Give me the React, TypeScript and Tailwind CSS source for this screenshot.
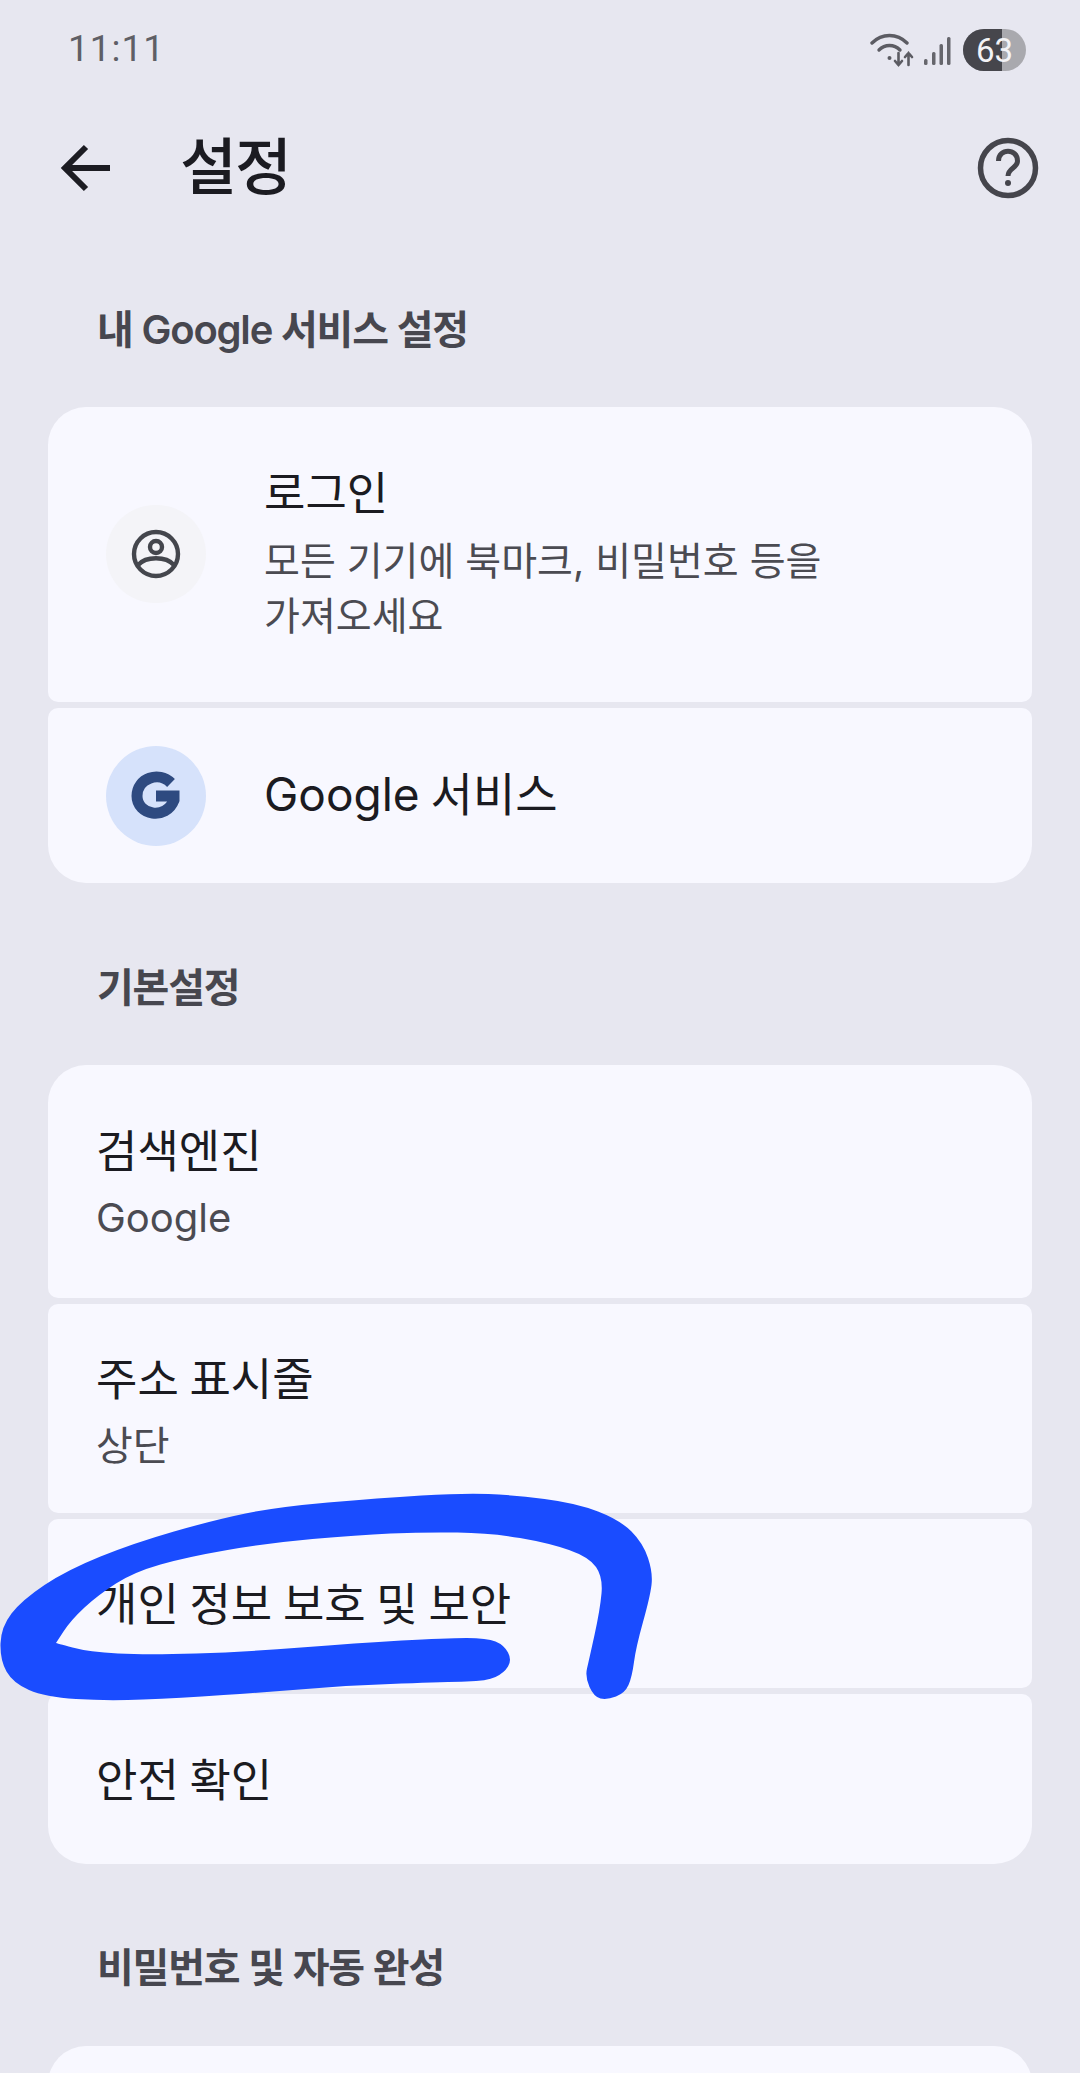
const fontStack = { fontFamily: 'Inter, "Noto Sans CJK KR", "Noto Sans", sans-serif' };

// outline of the hand-drawn pen mark, traced clockwise from the end of the lower stroke
const scribble: [number, number][] = [
  [487, 1638], [446, 1638], [357, 1643], [245, 1652], [147, 1655], [89, 1652], [56, 1643],
  [56, 1643], [71, 1620], [98, 1595], [134, 1572], [187, 1557], [268, 1543], [357, 1535],
  [424, 1532], [491, 1533], [549, 1543], [589, 1557], [603, 1577], [600, 1610], [589, 1660],
  [585, 1677], [594, 1697], [607, 1700], [625, 1693], [632, 1677], [636, 1647], [650, 1597],
  [653, 1573], [643, 1543], [620, 1520], [576, 1503], [513, 1495], [464, 1493], [379, 1498],
  [277, 1507], [214, 1520], [134, 1543], [67, 1570], [22, 1600], [1, 1627], [0, 1660],
  [13, 1683], [45, 1697], [107, 1701], [179, 1698], [268, 1692], [357, 1685], [446, 1682],
  [487, 1681], [504, 1673], [512, 1660], [504, 1645],
];

function smoothPath(points: [number, number][]) {
  const mid = (a: [number, number], b: [number, number]) => [(a[0] + b[0]) / 2, (a[1] + b[1]) / 2];
  const start = mid(points[points.length - 1], points[0]);
  let d = `M${start[0]} ${start[1]}`;
  points.forEach((p, i) => {
    const m = mid(p, points[(i + 1) % points.length]);
    d += ` Q${p[0]} ${p[1]} ${m[0]} ${m[1]}`;
  });
  return d + " Z";
}

function WifiIcon() {
  return (
    <svg width="44" height="34" viewBox="0 0 44 34" fill="none" stroke="#5c5c63" strokeLinecap="round">
      <path d="M2 10 C12 0 27 0 37 10" strokeWidth="3.4" />
      <path d="M9 17 C15 11 24 11 30 17" strokeWidth="3.4" />
      <circle cx="19.5" cy="25" r="2" fill="#5c5c63" stroke="none" />
      <path d="M28.5 20 V32 M25 28 L28.5 32 L32 28" strokeWidth="2.6" />
      <path d="M38.5 32 V20 M35 24 L38.5 20 L42 24" strokeWidth="2.6" />
    </svg>
  );
}

function SignalIcon() {
  return (
    <svg width="28" height="30" viewBox="0 0 28 30" fill="#66666c">
      <rect x="1" y="22" width="3.5" height="6" rx="1.5" />
      <rect x="9" y="15" width="3.5" height="13" rx="1.5" />
      <rect x="16.5" y="7" width="3.5" height="21" rx="1.5" />
      <rect x="24" y="0" width="3.5" height="28" rx="1.5" />
    </svg>
  );
}

function Battery() {
  return (
    <div className="relative flex h-[42px] w-[63px] items-center justify-center overflow-hidden rounded-[21px] bg-[#a9a9ae]">
      <div className="absolute inset-y-0 left-0 w-[39px] bg-[#46464c]" />
      <span className="relative text-[33px] leading-none text-[#f3f3f6]" style={{ fontFamily: "Roboto, sans-serif" }}>
        63
      </span>
    </div>
  );
}

function BackArrow() {
  return (
    <svg width="50" height="48" viewBox="0 0 50 48" fill="none" stroke="#1c1c22" strokeWidth="6">
      <path d="M50 24 H5" />
      <path d="M26 3 L5 24 L26 45" />
    </svg>
  );
}

function HelpIcon() {
  return (
    <svg width="62" height="62" viewBox="0 0 62 62" fill="none" stroke="#45454c" strokeWidth="5.5">
      <circle cx="31" cy="31" r="27.5" />
      <path d="M21.5 24 C21.5 11 40.5 11 40.5 24 C40.5 31 31 31 31 39" strokeWidth="5" />
      <circle cx="31" cy="46" r="3" fill="#45454c" stroke="none" />
    </svg>
  );
}

function PersonIcon() {
  return (
    <svg width="50" height="50" viewBox="0 0 50 50" fill="none" stroke="#44464d" strokeWidth="4.4">
      <circle cx="25" cy="25" r="22" />
      <circle cx="25" cy="18" r="6" />
      <path d="M7 36 C15 27 35 27 43 36" />
    </svg>
  );
}

function GoogleG() {
  return (
    <svg width="50" height="50" viewBox="0 0 50 50" fill="none" stroke="#2e4a80" strokeWidth="11">
      <path d="M40 12 C28 0 6 7 6 25 C6 44 35 50 43 29 L43 25 H25" />
    </svg>
  );
}

function SectionTitle({ children, className }: { children: string; className: string }) {
  return <h2 className={`pl-[97px] text-[40px] leading-[50px] font-semibold tracking-[-1.2px] text-[#47474f] ${className}`}>{children}</h2>;
}

function Row({
  title,
  sub,
  className,
}: {
  title: string;
  sub?: string;
  className: string;
}) {
  return (
    <div className={`bg-[#f8f8ff] pl-[48px] ${className}`}>
      <div className="text-[45px] leading-[60px] [word-spacing:-2px] text-[#1b1b21]">{title}</div>
      {sub && <div className="mt-[8px] text-[40px] leading-[55px] text-[#4b4b52]">{sub}</div>}
    </div>
  );
}

export default function App() {
  return (
    <div className="relative h-[2073px] w-[1080px] overflow-hidden bg-[#e7e7f0]" style={fontStack}>
      <div className="flex h-[100px] items-start justify-between pr-[54px] pl-[68px]">
        <span className="pt-[24px] text-[37px] leading-[50px] tracking-[1px] text-[#5f5f66]" style={{ fontFamily: "Roboto, sans-serif" }}>
          11:11
        </span>
        <div className="flex items-start pt-[29px]">
          <div className="pt-[4px]">
            <WifiIcon />
          </div>
          <div className="mr-[12px] ml-[9px] pt-[8px]">
            <SignalIcon />
          </div>
          <Battery />
        </div>
      </div>

      <header className="flex h-[136px] items-center pr-[41px] pl-[60px]">
        <BackArrow />
        <h1 className="ml-[70px] text-[62px] leading-none font-medium tracking-[-2px] text-[#1b1b21]">설정</h1>
        <div className="ml-auto">
          <HelpIcon />
        </div>
      </header>

      <SectionTitle className="pt-[69px]">내 Google 서비스 설정</SectionTitle>

      <section className="mx-[48px] mt-[52px] flex flex-col gap-[6px]">
        <div className="flex h-[295px] rounded-t-[38px] rounded-b-[10px] bg-[#f8f8ff] pt-[57px] pl-[58px]">
          <div className="mt-[41px] flex h-[98px] w-[100px] items-center justify-center rounded-full bg-[#f4f4f8]">
            <PersonIcon />
          </div>
          <div className="ml-[58px]">
            <div className="text-[45px] leading-[60px] text-[#1b1b21]">로그인</div>
            <div className="mt-[9px] w-[640px] text-[39px] leading-[55px] text-[#4b4b52]">
              모든 기기에 북마크, 비밀번호 등을
              <br />
              가져오세요
            </div>
          </div>
        </div>
        <div className="flex h-[175px] items-center rounded-t-[10px] rounded-b-[38px] bg-[#f8f8ff] pl-[58px]">
          <div className="flex h-[100px] w-[100px] items-center justify-center rounded-full bg-[#d6e2fb]">
            <GoogleG />
          </div>
          <div className="mb-[4px] ml-[58px] text-[46px] leading-[60px] [word-spacing:-2px] text-[#1b1b21]">Google 서비스</div>
        </div>
      </section>

      <SectionTitle className="pt-[80px]">기본설정</SectionTitle>

      <section className="mx-[48px] mt-[52px] flex flex-col gap-[6px]">
        <Row title="검색엔진" sub="Google" className="h-[233px] rounded-t-[38px] rounded-b-[10px] pt-[57px]" />
        <Row title="주소 표시줄" sub="상단" className="h-[209px] rounded-[10px] pt-[46px]" />
        <Row title="개인 정보 보호 및 보안" className="flex h-[169px] items-center rounded-[10px] pt-[3px]" />
        <Row title="안전 확인" className="flex h-[170px] items-center rounded-t-[10px] rounded-b-[38px] pt-[3px]" />
      </section>

      <SectionTitle className="pt-[79px]">비밀번호 및 자동 완성</SectionTitle>

      <section className="mx-[48px] mt-[53px] h-[200px] rounded-t-[38px] bg-[#f8f8ff]" />

      {/* pen scribble over the row */}
      <svg className="absolute top-0 left-0" width="1080" height="2073" viewBox="0 0 1080 2073">
        <path d={smoothPath(scribble)} fill="#1a4cff" />
      </svg>
    </div>
  );
}
